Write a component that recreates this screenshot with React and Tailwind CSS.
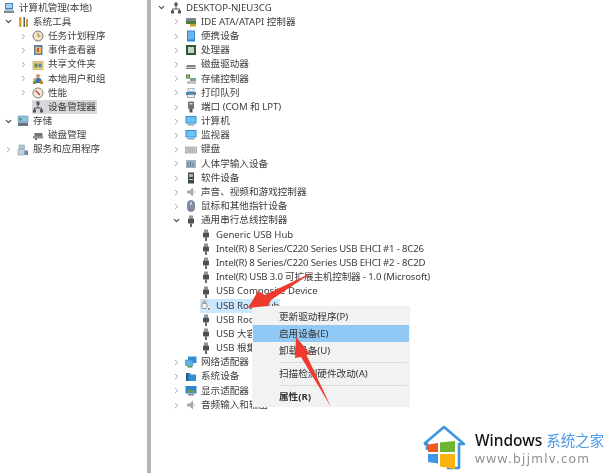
import React from 'react';
import { ChevronRight, ChevronDown } from 'lucide-react';

const icons = {
  computer: (
    <>
      <rect x="2" y="1" width="8" height="6.5" fill="#4a7fb5" />
      <rect x="3" y="2" width="6" height="4" fill="#a9d3f2" />
      <rect x="1" y="8.5" width="10" height="2.5" fill="#7d8a96" />
    </>
  ),
  tools: (
    <>
      <rect x="2" y="1" width="2.5" height="10" rx="1" fill="#d9a520" />
      <rect x="6.5" y="1" width="1.5" height="10" fill="#56616b" />
      <rect x="9" y="3" width="2" height="8" fill="#c93" />
    </>
  ),
  clock: (
    <>
      <circle cx="6" cy="6" r="5" fill="#efe6c8" stroke="#77787a" />
      <path d="M6 3v3.2h2.5" fill="none" stroke="#b5761a" strokeWidth="1" />
    </>
  ),
  event: (
    <>
      <rect x="2" y="1" width="8.5" height="10" fill="#5f7fa8" />
      <rect x="3.5" y="3" width="5.5" height="6.5" fill="#e8c26d" />
      <rect x="5" y="4" width="2" height="4" fill="#c8562e" />
    </>
  ),
  share: (
    <>
      <rect x="1" y="2.5" width="10" height="8" fill="#ecd27e" stroke="#b99a45" strokeWidth="0.6" />
      <rect x="2.5" y="4.5" width="3" height="4" fill="#5d8a4a" />
      <rect x="6.5" y="4.5" width="3" height="4" fill="#5a7fb0" />
    </>
  ),
  users: (
    <>
      <circle cx="6" cy="3" r="2" fill="#c69a5c" />
      <path d="M2.5 10V7.2c0-1.3 1.2-2.2 3.5-2.2s3.5.9 3.5 2.2V10z" fill="#3f6cb0" />
      <circle cx="2.8" cy="6.5" r="1.5" fill="#d49f4c" />
      <rect x="1" y="8" width="3.5" height="3" fill="#6a9a48" />
      <rect x="7.5" y="8" width="3.5" height="3" fill="#b7873a" />
    </>
  ),
  perf: (
    <>
      <circle cx="6" cy="6" r="5" fill="#f3ead9" stroke="#8b8173" />
      <path d="M3.5 3.5 8 8" stroke="#c1432e" strokeWidth="1.2" />
    </>
  ),
  devmgr: (
    <>
      <rect x="4.5" y="0.5" width="3" height="3.5" fill="#4e5660" />
      <path d="M6 4v3M2.5 9V7h7v2" fill="none" stroke="#4e5660" />
      <rect x="1" y="8.5" width="3" height="3" fill="#4e5660" />
      <rect x="8" y="8.5" width="3" height="3" fill="#4e5660" />
    </>
  ),
  storage: (
    <>
      <rect x="1" y="1" width="10" height="6" fill="#8cc4e8" stroke="#5e8eb0" strokeWidth="0.6" />
      <rect x="1" y="7.5" width="10" height="3.5" fill="#63767f" />
      <circle cx="3.5" cy="4" r="1.5" fill="#5aa05a" />
    </>
  ),
  disk: (
    <>
      <path d="M2.5 4h8v3h-8z" fill="#6f757a" />
      <rect x="1" y="7" width="10" height="2.5" fill="#8b9196" />
      <rect x="3" y="9.5" width="2" height="1.5" fill="#565b60" />
    </>
  ),
  services: (
    <>
      <rect x="2" y="1" width="5.5" height="4" fill="#a8c6dc" stroke="#7c96a8" strokeWidth="0.5" />
      <rect x="1" y="5.5" width="6.5" height="5.5" fill="#c3ced6" stroke="#7c96a8" strokeWidth="0.5" />
      <rect x="7.5" y="6.5" width="3.5" height="4.5" fill="#5f8fba" />
    </>
  ),
  ide: (
    <>
      <rect x="1" y="2" width="10" height="3" fill="#7c8a90" />
      <rect x="1" y="5" width="10" height="3" fill="#4f7d3c" />
      <rect x="5" y="8" width="6" height="2.5" fill="#c9a227" />
    </>
  ),
  portable: (
    <>
      <rect x="2" y="0.5" width="8" height="11" rx="0.6" fill="#2f86cf" />
      <rect x="3" y="1.5" width="6" height="8" fill="#6cb6ec" />
    </>
  ),
  cpu: (
    <>
      <rect x="1" y="1" width="10" height="10" fill="#2f5a35" />
      <rect x="3" y="3" width="6" height="6" fill="#c9d4c6" />
    </>
  ),
  drive: (
    <>
      <path d="M2 6h8l1 2v2H1V8z" fill="#7b8085" />
      <rect x="1" y="8" width="10" height="1" fill="#d2d5d8" />
    </>
  ),
  ctrl: (
    <>
      <rect x="1" y="1.5" width="4" height="4" fill="#4f8a57" />
      <rect x="5" y="5" width="6" height="3" fill="#7aa77f" />
      <rect x="2" y="8" width="9" height="3" fill="#bcc4c8" />
      <circle cx="3" cy="3.5" r="1" fill="#d9c24d" />
    </>
  ),
  printer: (
    <>
      <rect x="3" y="1.5" width="6" height="3" fill="#f4f4f4" stroke="#6c8ea8" strokeWidth="0.6" />
      <path d="M1 8V5h10v3z" fill="#4f87b0" />
      <rect x="2.5" y="7.5" width="7" height="3" fill="#eef0f2" stroke="#6c7a86" strokeWidth="0.6" />
    </>
  ),
  port: (
    <>
      <rect x="3" y="0.5" width="6" height="7.5" rx="1" fill="#6e7378" />
      <rect x="4.5" y="2" width="3" height="1.5" fill="#cfd3d6" />
      <rect x="4.5" y="8" width="3" height="3.5" fill="#4f5458" />
    </>
  ),
  monitor: (
    <>
      <rect x="0.5" y="1" width="11" height="7.5" fill="#2f8fd8" />
      <rect x="1.5" y="2" width="9" height="5.5" fill="#6fc1f2" />
      <rect x="2.5" y="9" width="7" height="1.5" fill="#9aa4ac" />
    </>
  ),
  keyboard: (
    <>
      <rect x="0.5" y="3" width="11" height="6" fill="#cfd2d4" stroke="#83888c" strokeWidth="0.6" />
      <path d="M2 5h8M2 7h8" stroke="#8f9498" strokeWidth="0.7" />
    </>
  ),
  hid: (
    <>
      <rect x="1" y="2" width="10" height="8" fill="#9fb4c6" />
      <path d="M3 9V4M5.5 9V3.5M8 9V4.5" stroke="#5e7488" strokeWidth="1" />
    </>
  ),
  soft: (
    <>
      <rect x="3" y="0.5" width="6" height="11" fill="#3f4a45" />
      <rect x="4" y="2" width="4" height="3" fill="#9ab59e" />
      <rect x="4" y="7" width="4" height="1" fill="#cfd6d0" />
    </>
  ),
  audio: (
    <>
      <path d="M2 4.5h2.5L8 1.5v9L4.5 7.5H2z" fill="#a7abae" />
      <rect x="8.5" y="4" width="1" height="4" fill="#c9cccf" />
    </>
  ),
  mouse: (
    <>
      <rect x="2.5" y="0.5" width="7" height="11" rx="3.5" fill="#7f8ea6" stroke="#5b6679" strokeWidth="0.6" />
      <rect x="5.3" y="2" width="1.4" height="3" fill="#e2e6ec" />
    </>
  ),
  usb: (
    <>
      <rect x="4" y="0.5" width="4" height="3" fill="#8f9397" />
      <rect x="3" y="3.5" width="6" height="5" rx="0.8" fill="#4c5155" />
      <rect x="5" y="8.5" width="2" height="3.5" fill="#65696d" />
    </>
  ),
  usboff: (
    <>
      <rect x="2.5" y="0.5" width="4" height="3" fill="#a9adb1" />
      <rect x="2" y="3.5" width="5" height="5" rx="0.8" fill="#f2f4f5" stroke="#777c80" strokeWidth="0.7" />
      <circle cx="9" cy="9" r="2.2" fill="#f7f7f7" />
      <path d="M7.8 8.4h2.4L9 10.2z" fill="#222" />
    </>
  ),
  net: (
    <>
      <rect x="3" y="0.5" width="8.5" height="6.5" fill="#2f8fd8" />
      <rect x="0.5" y="4" width="7.5" height="5.5" fill="#5db0e6" stroke="#2d7ab5" strokeWidth="0.5" />
      <rect x="2.5" y="10" width="5" height="1.5" fill="#4e9a54" />
    </>
  ),
  sys: (
    <>
      <path d="M1 2h4l1 1.5h5V10H1z" fill="#2f8fd8" />
      <rect x="1" y="2" width="2.5" height="8" fill="#2b5f86" />
    </>
  ),
  display: (
    <>
      <rect x="0.5" y="1" width="11" height="7.5" fill="#2f86c9" />
      <path d="M1.5 7.5 5 4l2 2 1.5-1 2 2.5z" fill="#6fa04a" />
      <rect x="3" y="9" width="6" height="1.5" fill="#7c8a92" />
    </>
  ),
};

const Icon = ({ name }) => (
  <svg viewBox="0 0 12 12" className="h-[12px] w-[12px] shrink-0">
    {icons[name]}
  </svg>
);

function Row({ pad, arrow, icon, label, highlight, tight }) {
  return (
    <div className={`flex h-[14.19px] items-center ${pad}`}>
      {arrow !== 'none' && (
        <span className="mr-[2px] flex w-[14px] shrink-0 items-center justify-center">
          {arrow === 'open' && <ChevronDown className="h-[9px] w-[9px] text-[#444]" strokeWidth={3} />}
          {arrow === 'closed' && <ChevronRight className="h-[9px] w-[9px] text-[#999]" strokeWidth={2.5} />}
        </span>
      )}
      <span className={`flex items-center ${highlight || ''}`}>
        <Icon name={icon} />
        <span className={`ml-[4px] whitespace-nowrap pr-[1px] ${tight ? 'tracking-[-0.16px]' : ''}`}>{label}</span>
      </span>
    </div>
  );
}

const leftRows = [
  { pad: 'pl-[3px]', arrow: 'none', icon: 'computer', label: '计算机管理(本地)' },
  { pad: 'pl-[1px]', arrow: 'open', icon: 'tools', label: '系统工具' },
  { pad: 'pl-[16px]', arrow: 'closed', icon: 'clock', label: '任务计划程序' },
  { pad: 'pl-[16px]', arrow: 'closed', icon: 'event', label: '事件查看器' },
  { pad: 'pl-[16px]', arrow: 'closed', icon: 'share', label: '共享文件夹' },
  { pad: 'pl-[16px]', arrow: 'closed', icon: 'users', label: '本地用户和组' },
  { pad: 'pl-[16px]', arrow: 'closed', icon: 'perf', label: '性能' },
  { pad: 'pl-[16px]', arrow: 'empty', icon: 'devmgr', label: '设备管理器', highlight: 'bg-[#d9d9d9]' },
  { pad: 'pl-[1px]', arrow: 'open', icon: 'storage', label: '存储' },
  { pad: 'pl-[16px]', arrow: 'empty', icon: 'disk', label: '磁盘管理' },
  { pad: 'pl-[1px]', arrow: 'closed', icon: 'services', label: '服务和应用程序' },
];

const L1 = 'pl-[18px]';
const L2 = 'pl-[33px]';

const rightRows = [
  { pad: 'pl-[3px]', arrow: 'open', icon: 'devmgr', label: 'DESKTOP-NJEU3CG' },
  { pad: L1, arrow: 'closed', icon: 'ide', label: 'IDE ATA/ATAPI 控制器' },
  { pad: L1, arrow: 'closed', icon: 'portable', label: '便携设备' },
  { pad: L1, arrow: 'closed', icon: 'cpu', label: '处理器' },
  { pad: L1, arrow: 'closed', icon: 'drive', label: '磁盘驱动器' },
  { pad: L1, arrow: 'closed', icon: 'ctrl', label: '存储控制器' },
  { pad: L1, arrow: 'closed', icon: 'printer', label: '打印队列' },
  { pad: L1, arrow: 'closed', icon: 'port', label: '端口 (COM 和 LPT)' },
  { pad: L1, arrow: 'closed', icon: 'monitor', label: '计算机' },
  { pad: L1, arrow: 'closed', icon: 'monitor', label: '监视器' },
  { pad: L1, arrow: 'closed', icon: 'keyboard', label: '键盘' },
  { pad: L1, arrow: 'closed', icon: 'hid', label: '人体学输入设备' },
  { pad: L1, arrow: 'closed', icon: 'soft', label: '软件设备' },
  { pad: L1, arrow: 'closed', icon: 'audio', label: '声音、视频和游戏控制器' },
  { pad: L1, arrow: 'closed', icon: 'mouse', label: '鼠标和其他指针设备' },
  { pad: L1, arrow: 'open', icon: 'usb', label: '通用串行总线控制器' },
  { pad: L2, arrow: 'empty', icon: 'usb', label: 'Generic USB Hub' },
  { pad: L2, arrow: 'empty', icon: 'usb', label: 'Intel(R) 8 Series/C220 Series USB EHCI #1 - 8C26', tight: true },
  { pad: L2, arrow: 'empty', icon: 'usb', label: 'Intel(R) 8 Series/C220 Series USB EHCI #2 - 8C2D', tight: true },
  { pad: L2, arrow: 'empty', icon: 'usb', label: 'Intel(R) USB 3.0 可扩展主机控制器 - 1.0 (Microsoft)', tight: true },
  { pad: L2, arrow: 'empty', icon: 'usb', label: 'USB Composite Device' },
  { pad: L2, arrow: 'empty', icon: 'usboff', label: 'USB Root Hub', highlight: 'bg-[#cce8ff]' },
  { pad: L2, arrow: 'empty', icon: 'usb', label: 'USB Root Hub' },
  { pad: L2, arrow: 'empty', icon: 'usb', label: 'USB 大容量存储设备' },
  { pad: L2, arrow: 'empty', icon: 'usb', label: 'USB 根集线器(USB 3.0)' },
  { pad: L1, arrow: 'closed', icon: 'net', label: '网络适配器' },
  { pad: L1, arrow: 'closed', icon: 'sys', label: '系统设备' },
  { pad: L1, arrow: 'closed', icon: 'display', label: '显示适配器' },
  { pad: L1, arrow: 'closed', icon: 'audio', label: '音频输入和输出' },
];

function MenuItem({ label, active, bold }) {
  return (
    <div className={`flex h-[17px] items-center pt-[1px] ${active ? 'mx-[1px] bg-[#90c8f6] pl-[26px]' : 'pl-[27px]'} ${bold ? 'font-bold' : ''}`}>
      {label}
    </div>
  );
}

const Sep = () => (
  <div className="flex h-[6px] items-center pl-[27px] pr-[3px]">
    <div className="h-px w-full bg-[#dcdcdc]" />
  </div>
);

function ContextMenu() {
  return (
    <div className="absolute left-[252px] top-[306px] h-[101px] w-[158px] bg-[#f2f2f2] pt-[2px] text-[#333]">
      <MenuItem label="更新驱动程序(P)" />
      <MenuItem label="启用设备(E)" active />
      <MenuItem label="卸载设备(U)" />
      <Sep />
      <MenuItem label="扫描检测硬件改动(A)" />
      <Sep />
      <MenuItem label="属性(R)" bold />
    </div>
  );
}

function Watermark() {
  return (
    <div className="absolute left-[420px] top-[423px] flex h-[50px] w-[191px] items-center bg-white">
      <svg viewBox="0 0 48 50" className="ml-[1px] h-[50px] w-[48px] shrink-0">
        <path d="M3 21 23 4l20 17h-5v24H26" fill="none" stroke="#3f95e0" strokeWidth="2.6" strokeLinejoin="round" />
        <path d="M3 21h3v6" fill="none" stroke="#3f95e0" strokeWidth="2.6" />
        <path d="M7 21.5 17 20v9H7z" fill="#ee5a22" />
        <path d="M19 19.5 34 18v11H19z" fill="#6cb52d" />
        <path d="M7 31h10v9.5L7 39z" fill="#3f95e8" />
        <path d="M19 31h15v15l-15-2.5z" fill="#fbb312" />
      </svg>
      <div className="ml-[6px] flex flex-col">
        <div className="flex items-baseline whitespace-nowrap leading-[20px]">
          <span className="text-[15.5px] font-medium text-[#111] [font-family:'Noto_Sans',sans-serif]">Windows</span>
          <span className="ml-[4px] text-[14.5px] text-[#4a9ae6]">系统之家</span>
        </div>
        <div className="pt-[1px] text-[12.5px] leading-[16px] tracking-[1.4px] whitespace-nowrap text-[#8e8e8e]">www.bjjmlv.com</div>
      </div>
    </div>
  );
}

function Arrows() {
  return (
    <svg viewBox="0 0 611 473" className="pointer-events-none absolute left-0 top-0 h-[473px] w-[611px]">
      <polygon points="248,308 258,291 265,295 313,272 271,300 268,306" fill="#ee3b2e" />
      <polygon points="296,337 311,355 306,354 331,407 301,357 295,358" fill="#ee3b2e" />
    </svg>
  );
}

export default function App() {
  return (
    <div className="relative flex h-[473px] w-[611px] overflow-hidden bg-white text-[9.6px] text-[#3d3d3d] blur-[0.35px] [font-family:'Noto_Sans','Noto_Sans_CJK_SC',sans-serif]">
      <div className="w-[147px] shrink-0 pt-[0.7px]">
        {leftRows.map((r, i) => (
          <Row key={i} {...r} />
        ))}
      </div>
      <div className="w-[4px] shrink-0 bg-[#b4b4b4]" />
      <div className="min-w-0 flex-1 pt-[0.7px]">
        {rightRows.map((r, i) => (
          <Row key={i} {...r} />
        ))}
      </div>
      <ContextMenu />
      <Arrows />
      <Watermark />
    </div>
  );
}
